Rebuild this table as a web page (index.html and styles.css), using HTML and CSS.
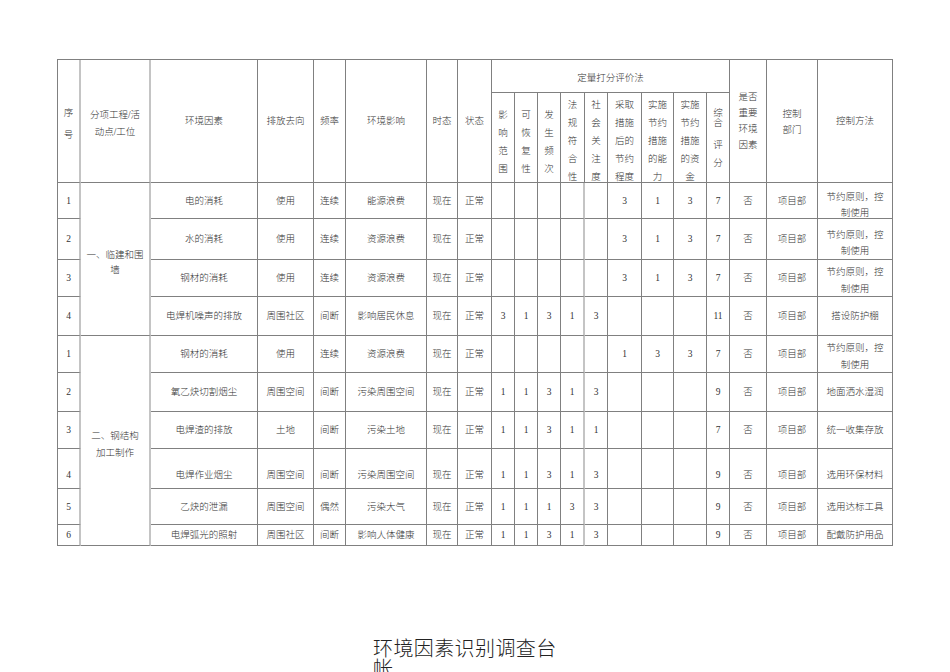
FILE: index.html
```html
<!DOCTYPE html>
<html lang="zh-CN">
<head>
<meta charset="utf-8">
<title>环境因素识别调查台帐</title>
<link rel="stylesheet" href="styles.css">
</head>
<body>
<div class="page">
  <div class="sheet">
    <!-- header row 1 -->
    <div class="c rs2 lt h-xh">序<br>号</div>
    <div class="c rs2 lt h-fx">分项工程/活<br>动点/工位</div>
    <div class="c rs2">环境因素</div>
    <div class="c rs2">排放去向</div>
    <div class="c rs2">频率</div>
    <div class="c rs2">环境影响</div>
    <div class="c rs2">时态</div>
    <div class="c rs2">状态</div>
    <div class="c cs9 h-top">定量打分评价法</div>
    <div class="c rs2 h-sf">是否<br>重要<br>环境<br>因素</div>
    <div class="c rs2 h-bm">控制<br>部门</div>
    <div class="c rs2">控制方法</div>
    <!-- header row 2 -->
    <div class="c v4">影<br>响<br>范<br>围</div>
    <div class="c v4">可<br>恢<br>复<br>性</div>
    <div class="c v4">发<br>生<br>频<br>次</div>
    <div class="c v5">法<br>规<br>符<br>合<br>性</div>
    <div class="c v5">社<br>会<br>关<br>注<br>度</div>
    <div class="c v5">采取<br>措施<br>后的<br>节约<br>程度</div>
    <div class="c v5">实施<br>节约<br>措施<br>的能<br>力</div>
    <div class="c v5">实施<br>节约<br>措施<br>的资<br>金</div>
    <div class="c zh"><div class="zh-box"><span class="zh-a">综</span><span class="zh-a">合</span><span class="zh-b">评</span><span class="zh-c">分</span></div></div>

    <!-- section 1 -->
    <div class="c lt">1</div>
    <div class="c lt rs4 sec1">一、临建和围<br>墙</div>
    <div class="c">电的消耗</div><div class="c">使用</div><div class="c">连续</div><div class="c">能源浪费</div><div class="c">现在</div><div class="c">正常</div>
    <div class="c"></div><div class="c"></div><div class="c"></div><div class="c lt"></div><div class="c"></div>
    <div class="c">3</div><div class="c">1</div><div class="c">3</div><div class="c">7</div>
    <div class="c">否</div><div class="c">项目部</div><div class="c two">节约原则，控<br>制使用</div>

    <div class="c lt">2</div>
    <div class="c">水的消耗</div><div class="c">使用</div><div class="c">连续</div><div class="c">资源浪费</div><div class="c">现在</div><div class="c">正常</div>
    <div class="c"></div><div class="c"></div><div class="c"></div><div class="c lt"></div><div class="c"></div>
    <div class="c">3</div><div class="c">1</div><div class="c">3</div><div class="c">7</div>
    <div class="c">否</div><div class="c">项目部</div><div class="c two">节约原则，控<br>制使用</div>

    <div class="c lt">3</div>
    <div class="c">钢材的消耗</div><div class="c">使用</div><div class="c">连续</div><div class="c">资源浪费</div><div class="c">现在</div><div class="c">正常</div>
    <div class="c"></div><div class="c"></div><div class="c"></div><div class="c lt"></div><div class="c"></div>
    <div class="c">3</div><div class="c">1</div><div class="c">3</div><div class="c">7</div>
    <div class="c">否</div><div class="c">项目部</div><div class="c two2">节约原则，控<br>制使用</div>

    <div class="c lt">4</div>
    <div class="c">电焊机噪声的排放</div><div class="c">周围社区</div><div class="c">间断</div><div class="c">影响居民休息</div><div class="c">现在</div><div class="c">正常</div>
    <div class="c">3</div><div class="c">1</div><div class="c">3</div><div class="c lt">1</div><div class="c">3</div>
    <div class="c"></div><div class="c"></div><div class="c"></div><div class="c">11</div>
    <div class="c">否</div><div class="c">项目部</div><div class="c">搭设防护棚</div>

    <!-- section 2 -->
    <div class="c lt">1</div>
    <div class="c lt rs6 sec2">二、钢结构<br>加工制作</div>
    <div class="c">钢材的消耗</div><div class="c">使用</div><div class="c">连续</div><div class="c">资源浪费</div><div class="c">现在</div><div class="c">正常</div>
    <div class="c"></div><div class="c"></div><div class="c"></div><div class="c lt"></div><div class="c"></div>
    <div class="c">1</div><div class="c">3</div><div class="c">3</div><div class="c">7</div>
    <div class="c">否</div><div class="c">项目部</div><div class="c two2">节约原则，控<br>制使用</div>

    <div class="c lt">2</div>
    <div class="c">氧乙炔切割烟尘</div><div class="c">周围空间</div><div class="c">间断</div><div class="c">污染周围空间</div><div class="c">现在</div><div class="c">正常</div>
    <div class="c">1</div><div class="c">1</div><div class="c">3</div><div class="c lt">1</div><div class="c">3</div>
    <div class="c"></div><div class="c"></div><div class="c"></div><div class="c">9</div>
    <div class="c">否</div><div class="c">项目部</div><div class="c">地面洒水湿润</div>

    <div class="c lt">3</div>
    <div class="c">电焊渣的排放</div><div class="c">土地</div><div class="c">间断</div><div class="c">污染土地</div><div class="c">现在</div><div class="c">正常</div>
    <div class="c">1</div><div class="c">1</div><div class="c">3</div><div class="c lt">1</div><div class="c">1</div>
    <div class="c"></div><div class="c"></div><div class="c"></div><div class="c">7</div>
    <div class="c">否</div><div class="c">项目部</div><div class="c">统一收集存放</div>

    <div class="c lt low">4</div>
    <div class="c low">电焊作业烟尘</div><div class="c low">周围空间</div><div class="c low">间断</div><div class="c low">污染周围空间</div><div class="c low">现在</div><div class="c low">正常</div>
    <div class="c low">1</div><div class="c low">1</div><div class="c low">3</div><div class="c lt low">1</div><div class="c low">3</div>
    <div class="c"></div><div class="c"></div><div class="c"></div><div class="c low">9</div>
    <div class="c low">否</div><div class="c low">项目部</div><div class="c low">选用环保材料</div>

    <div class="c lt">5</div>
    <div class="c">乙炔的泄漏</div><div class="c">周围空间</div><div class="c">偶然</div><div class="c">污染大气</div><div class="c">现在</div><div class="c">正常</div>
    <div class="c">1</div><div class="c">1</div><div class="c">1</div><div class="c lt">3</div><div class="c">3</div>
    <div class="c"></div><div class="c"></div><div class="c"></div><div class="c">9</div>
    <div class="c">否</div><div class="c">项目部</div><div class="c">选用达标工具</div>

    <div class="c lt">6</div>
    <div class="c">电焊弧光的照射</div><div class="c">周围社区</div><div class="c">间断</div><div class="c">影响人体健康</div><div class="c">现在</div><div class="c">正常</div>
    <div class="c">1</div><div class="c">1</div><div class="c">3</div><div class="c lt">1</div><div class="c">3</div>
    <div class="c"></div><div class="c"></div><div class="c"></div><div class="c">9</div>
    <div class="c">否</div><div class="c">项目部</div><div class="c">配戴防护用品</div>
  </div>

  <div class="title">环境因素识别调查台帐</div>
</div>
</body>
</html>
```

FILE: styles.css
```css
* { box-sizing: border-box; }

html, body {
  margin: 0;
  padding: 0;
  background: #ffffff;
  overflow: hidden;
}

.page {
  width: 950px;
  height: 672px;
  padding: 59px 0 0 57px;
  overflow: hidden;
}

.sheet {
  display: grid;
  grid-template-columns: 23px 70px 107px 56px 32px 81px 31px 34px 23px 23px 23px 24px 23px 34px 32px 33px 23px 37px 51px 75px;
  grid-template-rows: 33px 90px 36px 41px 37px 39px 37px 39px 37px 40px 36px 21px;
  width: 836px;
  border-left: 1px solid #808080;
  border-top: 1px solid #808080;
  font-family: "Liberation Serif", "Noto Sans CJK SC", serif;
  font-size: 9.5px;
  font-weight: 300;
  color: #333333;
}

.c {
  display: flex;
  align-items: center;
  justify-content: center;
  text-align: center;
  line-height: 12px;
  white-space: nowrap;
  min-width: 0;
  min-height: 0;
  border-right: 1px solid #808080;
  border-bottom: 1px solid #808080;
}

.c.lt { border-right: 2px solid #c4c4c4; }

.rs2 { grid-row: span 2; }
.rs4 { grid-row: span 4; }
.rs6 { grid-row: span 6; }
.cs9 { grid-column: span 9; }

/* header tweaks */
.h-xh { line-height: 22px; padding-top: 6px; }
.h-fx { line-height: 17px; padding-top: 5px; }
.h-top { padding-top: 4px; }
.h-sf { line-height: 16px; }
.h-bm { line-height: 16px; padding-top: 2px; }

.v4 { line-height: 18px; padding-top: 8px; }
.v5 { line-height: 18px; padding-top: 7px; }

.zh { align-items: flex-start; padding-top: 15px; }
.zh-box { display: flex; flex-direction: column; align-items: center; }
.zh-a { display: block; line-height: 10px; }
.zh-b { display: block; line-height: 18px; margin-top: 8px; }
.zh-c { display: block; line-height: 18px; }

/* body tweaks */
.sec1 { line-height: 15px; padding-top: 8px; white-space: normal; }
.sec2 { line-height: 17px; padding-top: 8px; white-space: normal; }

.two { line-height: 16px; padding-top: 8px; }
.two2 { line-height: 17px; padding-top: 5px; }

.low { align-items: flex-end; padding-bottom: 7px; }

.title {
  margin: 92px 0 0 316px;
  width: 195px;
  font-family: "Noto Sans CJK SC", sans-serif;
  font-size: 20px;
  line-height: 20px;
  letter-spacing: 0.4px;
  font-weight: 300;
  color: #222222;
}
```
